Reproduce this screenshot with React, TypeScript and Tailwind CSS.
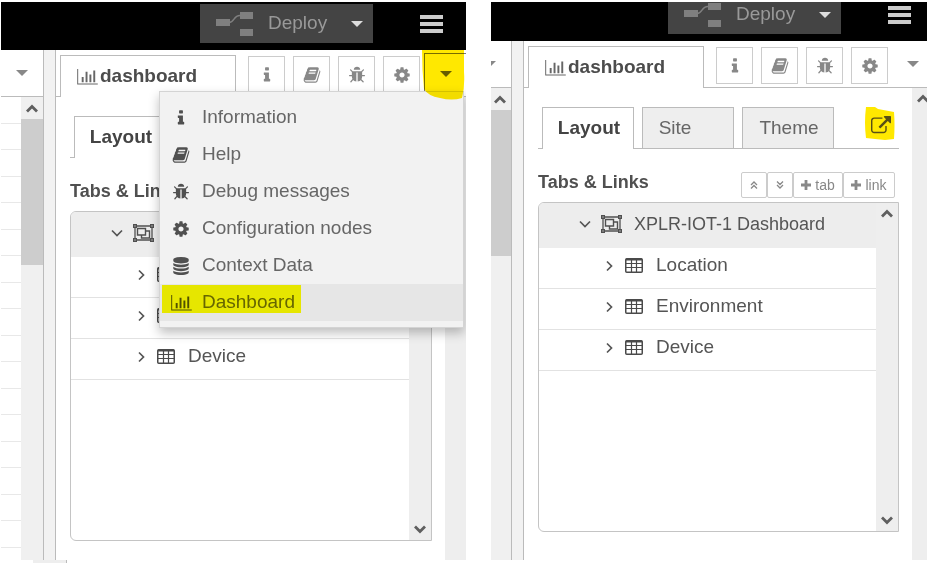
import React from "react";

const ICONS = {
  chart:
    "M640 896v512h-192v-512h192zm384-512v1024h-192v-1024h192zm1024 1152v96h-2048v-1536h96v1440h1952zm-640-896v768h-192v-768h192zm384-384v1152h-192v-1152h192z",
  info: "M1216 1344v128q0 26-19 45t-45 19h-512q-26 0-45-19t-19-45v-128q0-26 19-45t45-19h64v-384h-64q-26 0-45-19t-19-45v-128q0-26 19-45t45-19h384q26 0 45 19t19 45v576h64q26 0 45 19t19 45zm-128-1152v192q0 26-19 45t-45 19h-256q-26 0-45-19t-19-45v-192q0-26 19-45t45-19h256q26 0 45 19t19 45z",
  book: "M1703 478q40 57 18 129l-275 906q-19 64-76.5 107.5t-122.5 43.5h-923q-77 0-148.5-53.5t-99.5-131.5q-24-67-2-127 0-4 3-27t4-37q1-8-3-21.5t-3-19.5q2-11 8-21t16.5-23.5 16.5-23.5q23-38 45-91.5t30-91.5q3-10 .5-30t-.5-28q3-11 17-28t17-23q21-36 42-92t25-90q1-9-2.5-32t.5-28q4-13 22-30.5t22-22.5q19-26 42.5-84.5t27.5-96.5q1-8-3-25.5t-2-26.5q2-8 9-18t18-23 17-21q8-12 16.5-30.5t15-35 16-36 19.5-32 26.5-23.5 36-11.5 47.5 5.5l-1 3q38-9 51-9h761q74 0 114 56t18 130l-274 906q-36 119-71.5 153.5t-128.5 34.5h-869q-27 0-38 15-11 16-1 43 24 70 144 70h923q29 0 56-15.5t35-41.5l300-987q7-22 5-57 38 15 59 43zm-1064 2q-4 13 2 22.5t20 9.5h608q13 0 25.5-9.5t16.5-22.5l21-64q4-13-2-22.5t-20-9.5h-608q-13 0-25.5 9.5t-16.5 22.5zm-83 256q-4 13 2 22.5t20 9.5h608q13 0 25.5-9.5t16.5-22.5l21-64q4-13-2-22.5t-20-9.5h-608q-13 0-25.5 9.5t-16.5 22.5z",
  bug: "M1696 960q0 26-19 45t-45 19h-224q0 171-67 290l208 209q19 19 19 45t-19 45q-18 19-45 19t-45-19l-198-197q-5 5-15 13t-42 28.5-65 36.5-82 29-97 13v-896h-128v896q-51 0-101.5-13.5t-87-33-66-39-43.5-32.5l-15-14-183 207q-20 21-48 21-24 0-43-16-19-18-20.5-44.5t15.5-46.5l202-227q-58-114-58-274h-224q-26 0-45-19t-19-45 19-45 45-19h224v-294l-173-173q-19-19-19-45t19-45 45-19 45 19l173 173h844l173-173q19-19 45-19t45 19 19 45-19 45l-173 173v294h224q26 0 45 19t19 45zm-480-576h-640q0-133 93.5-226.5t226.5-93.5 226.5 93.5 93.5 226.5z",
  cog: "M1152 896q0-106-75-181t-181-75-181 75-75 181 75 181 181 75 181-75 75-181zm512-109v222q0 12-8 23t-20 13l-185 28q-19 54-39 91 35 50 107 138 10 12 10 25t-9 23q-27 37-99 108t-94 71q-12 0-26-9l-138-108q-44 23-91 38-16 136-29 186-7 28-36 28h-222q-14 0-24.5-8.5t-11.5-21.5l-28-184q-49-16-90-37l-141 107q-10 9-25 9-14 0-25-11-126-114-165-168-7-10-7-23 0-12 8-23 15-21 51-66.5t54-70.5q-27-50-41-99l-183-27q-13-2-21-12.5t-8-23.5v-222q0-12 8-23t19-13l186-28q14-46 39-92-40-57-107-138-10-12-10-24 0-10 9-23 26-36 98.5-107.5t94.5-71.5q13 0 26 10l138 107q44-23 91-38 16-136 29-186 7-28 36-28h222q14 0 24.5 8.5t11.5 21.5l28 184q49 16 90 37l142-107q9-9 24-9 13 0 25 10 129 119 165 170 7 8 7 22 0 12-8 23-15 21-51 66.5t-54 70.5q26 50 41 98l183 28q13 2 21 12.5t8 23.5z",
  database:
    "M896 768q237 0 443-43t325-127v170q0 69-103 128t-280 93.5-385 34.5-385-34.5-280-93.5-103-128v-170q119 84 325 127t443 43zm0 768q237 0 443-43t325-127v170q0 69-103 128t-280 93.5-385 34.5-385-34.5-280-93.5-103-128v-170q119 84 325 127t443 43zm0-384q237 0 443-43t325-127v170q0 69-103 128t-280 93.5-385 34.5-385-34.5-280-93.5-103-128v-170q119 84 325 127t443 43zm0-1152q208 0 385 34.5t280 93.5 103 128v128q0 69-103 128t-280 93.5-385 34.5-385-34.5-280-93.5-103-128v-128q0-69 103-128t280-93.5 385-34.5z",
  external:
    "M1408 928v320q0 119-84.5 203.5t-203.5 84.5h-832q-119 0-203.5-84.5t-84.5-203.5v-832q0-119 84.5-203.5t203.5-84.5h704q14 0 23 9t9 23v64q0 14-9 23t-23 9h-704q-66 0-113 47t-47 113v832q0 66 47 113t113 47h832q66 0 113-47t47-113v-320q0-14 9-23t23-9h64q14 0 23 9t9 23zm384-864v512q0 26-19 45t-45 19-45-19l-176-176-652 652q-10 10-23 10t-23-10l-114-114q-10-10-10-23t10-23l652-652-176-176q-19-19-19-45t19-45 45-19h512q26 0 45 19t19 45z",
};

type IconName = keyof typeof ICONS;

function Icon({ name, className = "size-[18px]" }: { name: IconName; className?: string }) {
  return (
    <svg
      aria-hidden="true"
      viewBox={name === "chart" ? "0 0 2048 1792" : "0 0 1792 1792"}
      className={`shrink-0 ${className}`}
      fill="currentColor"
    >
      <path d={ICONS[name]} />
    </svg>
  );
}

function Caret({ className = "" }: { className?: string }) {
  return (
    <svg aria-hidden="true" viewBox="0 0 12 6" className={`h-1.5 w-3 shrink-0 ${className}`} fill="currentColor">
      <path d="M0 0h12L6 6z" />
    </svg>
  );
}

function Chevron({ dir, className = "" }: { dir: "up" | "down"; className?: string }) {
  return (
    <svg
      aria-hidden="true"
      viewBox="0 0 12 9"
      className={`h-[9px] w-3 shrink-0 text-[#5f5f5f] ${className}`}
      fill="none"
      stroke="currentColor"
      strokeWidth="2.8"
    >
      <path d={dir === "up" ? "M1 7.5 6 2.5l5 5" : "M1 1.500l5 5 5-5"} />
    </svg>
  );
}

function DoubleChevron({ dir }: { dir: "up" | "down" }) {
  return (
    <svg aria-hidden="true" viewBox="0 0 8 8" className="size-2" fill="none" stroke="currentColor" strokeWidth="1.3">
      <path d={dir === "up" ? "M1 4l3-3 3 3M1 7.500l3-3 3 3" : "M1 .5l3 3 3-3M1 4l3 3 3-3"} />
    </svg>
  );
}

function PlusIcon() {
  return (
    <svg aria-hidden="true" viewBox="0 0 10 10" className="size-2.5" fill="currentColor">
      <path d="M3.600 0h2.800v3.600H10v2.800H6.400V10H3.600V6.400H0V3.600h3.600z" />
    </svg>
  );
}

function DeployIcon() {
  return (
    <svg aria-hidden="true" viewBox="0 0 37 24" className="h-6 w-[37px] shrink-0">
      <path d="M13 10.500c6 0 4-7 11-7" fill="none" stroke="#7f7f7f" strokeWidth="1.500" />
      <path d="M0 7h14v7H0zM24 0h13v7H24zM24 17h13v7H24z" fill="#7f7f7f" />
    </svg>
  );
}

function GroupIcon() {
  return (
    <svg aria-hidden="true" viewBox="0 0 21 18" className="h-[18px] w-[21px] shrink-0" fill="none" stroke="#505050">
      <path d="M2 2h17v14H2z" strokeWidth="1.300" />
      <path d="M4.500 4.500h8v6.500h-8z" strokeWidth="1.400" />
      <path d="M12.500 7h4v7h-8v-3" strokeWidth="1.400" />
      <path d="M.6.600h2.800v2.800H.6zM17.600.600h2.800v2.800h-2.800zM.6 14.600h2.800v2.800H.6zM17.600 14.600h2.800v2.800h-2.800z" fill="#999" strokeWidth="1.200" />
    </svg>
  );
}

function TableIcon() {
  return (
    <svg aria-hidden="true" viewBox="0 0 18 15" className="h-[15px] w-[18px] shrink-0" fill="none" stroke="#4a4a4a">
      <rect x=".75" y=".75" width="16.500" height="13.500" rx="1" strokeWidth="1.500" />
      <path d="M1 1.500h16" strokeWidth="2" />
      <path d="M1 5.500h16M1 9.500h16M6.500 1v13M11.500 1v13" strokeWidth="1.200" />
    </svg>
  );
}

function Twisty({ open }: { open?: boolean }) {
  return (
    <svg aria-hidden="true" viewBox="0 0 12 12" className="size-3 shrink-0" fill="none" stroke="#555" strokeWidth="1.700">
      <path d={open ? "M1 3.500l5 5 5-5" : "M4 1.500 8.500 6 4 10.500"} />
    </svg>
  );
}

function TopBar({ wide }: { wide: boolean }) {
  return (
    <header
      className={`flex items-end justify-end overflow-hidden bg-black ${wide ? "h-12 pr-[23px]" : "h-[39px] pr-4"}`}
    >
      <div className="flex h-12 shrink-0 items-center gap-[47px] pb-[5px]">
        <button className="flex h-[39px] w-[173px] items-center bg-[#444] pl-4 text-[19px] text-[#999]">
          <DeployIcon />
          <span className="pl-[15px]">Deploy</span>
          <Caret className="ml-auto mr-[10px] text-[#ddd]" />
        </button>
        <button aria-label="Menu" className="flex w-[23px] flex-col gap-[3px]">
          <span className="h-1 bg-[#ccc]" />
          <span className="h-1 bg-[#ccc]" />
          <span className="h-1 bg-[#ccc]" />
        </button>
      </div>
    </header>
  );
}

function Canvas({ wide }: { wide: boolean }) {
  return (
    <div
      className={`flex shrink-0 flex-col items-end overflow-hidden border-r border-[#bbb] ${wide ? "w-[43px]" : "w-[21px]"}`}
    >
      <div className="flex h-[47px] w-[43px] shrink-0 items-center justify-end border-b border-[#bbb] pr-[15px]">
        <Caret className="text-[#888]" />
      </div>
      <div className="flex w-[43px] flex-1">
        <div className="h-0 min-h-full flex-1 overflow-hidden">
          {Array.from({ length: 9 }, (_, i) => (
            <div key={i}>
              <div className="h-[27px] border-b border-[#e8e8e8]" />
              <div className="h-[26px] border-b border-[#e8e8e8]" />
            </div>
          ))}
        </div>
        <div className="w-[22px] bg-[#f0f0f0]">
          <div className="flex h-[22px] items-center justify-center">
            <Chevron dir="up" />
          </div>
          <div className="h-[146px] bg-[#cdcdcd]" />
        </div>
      </div>
    </div>
  );
}

const TOOL_TABS: { icon: IconName; label: string }[] = [
  { icon: "info", label: "Information" },
  { icon: "book", label: "Help" },
  { icon: "bug", label: "Debug messages" },
  { icon: "cog", label: "Configuration nodes" },
];

function SidebarTabs({ wide }: { wide: boolean }) {
  return (
    <div className="flex h-[47px] items-end border-b border-[#bbb] pl-1">
      <button className="-mb-px flex h-[42px] w-[176px] shrink-0 items-center border border-b-0 border-[#bbb] bg-white pl-4 text-[19px] font-bold text-[#4c4c4c]">
        <Icon name="chart" className="h-[18px] w-[21px] text-[#666]" />
        <span className="pl-[2px]">dashboard</span>
      </button>
      <div className="flex shrink-0 gap-2 pb-[3px] pl-3">
        {TOOL_TABS.map((tab) => (
          <button
            key={tab.label}
            aria-label={tab.label}
            className="flex size-[37px] items-center justify-center border border-[#ccc] bg-white text-[#888]"
          >
            <Icon name={tab.icon} />
          </button>
        ))}
      </div>
      <button
        aria-label="More tabs"
        className={`ml-1 flex h-[43px] w-[42px] shrink-0 items-center justify-center pb-[3px] ${
          wide ? "border-l border-t border-[#777] text-[#666]" : "text-[#888]"
        }`}
      >
        <Caret />
      </button>
    </div>
  );
}

const SMALL_BUTTON =
  "flex h-[26px] items-center justify-center gap-1 rounded-xs border border-[#ccc] bg-white text-sm text-[#888]";

function TreeRow({ label, covered = false }: { label: string; covered?: boolean }) {
  return (
    <li className="border-b border-[#e2e2e2]">
      <button aria-label={label} className="flex h-10 w-full items-center pb-[5px] pl-16">
        <Twisty />
        <span className="flex w-[41px] justify-center pr-[3px]">
          <TableIcon />
        </span>
        {!covered && <span>{label}</span>}
      </button>
    </li>
  );
}

function DashboardPanel({ covered }: { covered: boolean }) {
  return (
    <section className="flex min-w-0 flex-1 flex-col pb-[19px] pl-[14px] pr-[13px] pt-[19px]">
      <div className="flex h-[42px] items-stretch gap-2 border-b border-[#bbb] pl-1 text-[19px] text-[#666]">
        <button className="-mb-px w-[92px] border border-b-0 border-[#bbb] bg-white pl-[2px] font-bold text-[#444]">
          Layout
        </button>
        <button className="w-[92px] border border-b-0 border-[#bbb] bg-[#eee] pr-[26px]">Site</button>
        <button className="w-[92px] border border-b-0 border-[#bbb] bg-[#eee] pl-[2px]">Theme</button>
        <div className="relative ml-auto mr-1 flex w-[30px]">
          <svg aria-hidden="true" viewBox="0 0 30 34" className="absolute left-0 top-0 h-[34px] w-[30px]">
            <path d="M1 0h9l3 2 16 3q1 13 0 27l-9 1-10-1-9-1Q-1 16 1 0z" fill="#ffe800" />
          </svg>
          <a href="#dashboard" aria-label="Open dashboard" className="relative flex h-[38px] w-full items-center justify-center pl-px text-[#584f16]">
            <Icon name="external" className="size-5" />
          </a>
        </div>
      </div>
      <div className="mt-[23px] flex items-center justify-between pr-1">
        <h2 className="whitespace-nowrap pb-[6px] text-lg leading-5 font-bold text-[#505050]">Tabs &amp; Links</h2>
        <div className="flex">
          <button aria-label="Collapse all" className={`${SMALL_BUTTON} w-[26px]`}>
            <DoubleChevron dir="up" />
          </button>
          <button aria-label="Expand all" className={`${SMALL_BUTTON} w-[26px]`}>
            <DoubleChevron dir="down" />
          </button>
          <button aria-label="Add tab" className={`${SMALL_BUTTON} w-[50px]`}>
            <PlusIcon />
            {!covered && "tab"}
          </button>
          <button aria-label="Add link" className={`${SMALL_BUTTON} w-[52px]`}>
            <PlusIcon />
            {!covered && "link"}
          </button>
        </div>
      </div>
      <div className="mt-1 flex h-[330px] overflow-hidden rounded-l-md border border-[#c4c4c4] text-[19px] text-[#555]">
        <ul className="min-w-0 flex-1">
          <li className="bg-[#ededed]">
            <button aria-label="XPLR-IOT-1 Dashboard" className="flex h-[45px] w-full items-center whitespace-nowrap pb-1 pl-10 text-lg">
              <Twisty open />
              <span className="pl-[10px] pr-3">
                <GroupIcon />
              </span>
              {!covered && <span>XPLR-IOT-1 Dashboard</span>}
            </button>
          </li>
          <TreeRow label="Location" covered={covered} />
          <TreeRow label="Environment" covered={covered} />
          <TreeRow label="Device" />
        </ul>
        <div className="flex w-[22px] flex-col items-center justify-between bg-[#eee] py-[6px]">
          <Chevron dir="up" />
          <Chevron dir="down" />
        </div>
      </div>
    </section>
  );
}

const MENU: { icon: IconName; label: string }[] = [
  ...TOOL_TABS,
  { icon: "database", label: "Context Data" },
  { icon: "chart", label: "Dashboard" },
];

function TabMenu() {
  return (
    <>
      <nav className="absolute right-[2px] top-[41px] w-[305px] border border-[#d4d4d4] bg-[#f2f2f2] pb-[6px] pt-[7px] text-[19px] text-[#666] shadow-[0_5px_10px_rgba(0,0,0,0.25)]">
        {MENU.map((item) => (
          <button
            key={item.label}
            className={`relative flex h-[37px] w-full items-center ${item.label === "Dashboard" ? "bg-[#e6e6e6]" : ""}`}
          >
            <span className="flex w-[42px] justify-center text-[#505050]">
              <Icon name={item.icon} className={item.icon === "chart" ? "h-[18px] w-[21px]" : "size-[18px]"} />
            </span>
            <span>{item.label}</span>
            {item.label === "Dashboard" && (
              <span className="absolute left-[2px] top-px h-7 w-[139px] bg-[#ffff00] mix-blend-multiply" />
            )}
          </button>
        ))}
      </nav>
      <svg
        aria-hidden="true"
        viewBox="0 0 44 50"
        className="pointer-events-none absolute right-0 top-0 h-[50px] w-11 mix-blend-multiply"
      >
        <path d="M0 0h42v22q1 15-2 26-10 3-22 0Q6 46 2 39 0 20 0 0z" fill="#ffe800" />
      </svg>
    </>
  );
}

function EditorView({ menuOpen = false }: { menuOpen?: boolean }) {
  return (
    <div className="flex flex-col overflow-hidden bg-white">
      <TopBar wide={menuOpen} />
      <div className="relative flex flex-1">
        <Canvas wide={menuOpen} />
        <div className="w-3 shrink-0 border-r border-[#bbb] bg-[#f2f2f2]" />
        <div className="flex min-w-0 flex-1 flex-col overflow-hidden">
          <SidebarTabs wide={menuOpen} />
          <div className="flex flex-1">
            <DashboardPanel covered={menuOpen} />
            <div className={`flex shrink-0 overflow-hidden bg-[#eee] ${menuOpen ? "w-[21px]" : "w-[15px]"}`}>
              <Chevron dir="up" className="ml-[5px] mt-[6px]" />
            </div>
          </div>
        </div>
        {menuOpen && <TabMenu />}
      </div>
    </div>
  );
}

export default function App() {
  return (
    <main className="bg-white pl-px pr-1 pt-[2px] font-['Liberation_Sans',Arial,sans-serif]">
      <div className="grid grid-cols-[465fr_436fr] gap-[25px]">
        <EditorView menuOpen />
        <EditorView />
      </div>
      <div className="flex h-[3px] pl-8">
        <div className="w-[34px] border-r border-[#bbb] bg-[#eee]" />
      </div>
    </main>
  );
}
